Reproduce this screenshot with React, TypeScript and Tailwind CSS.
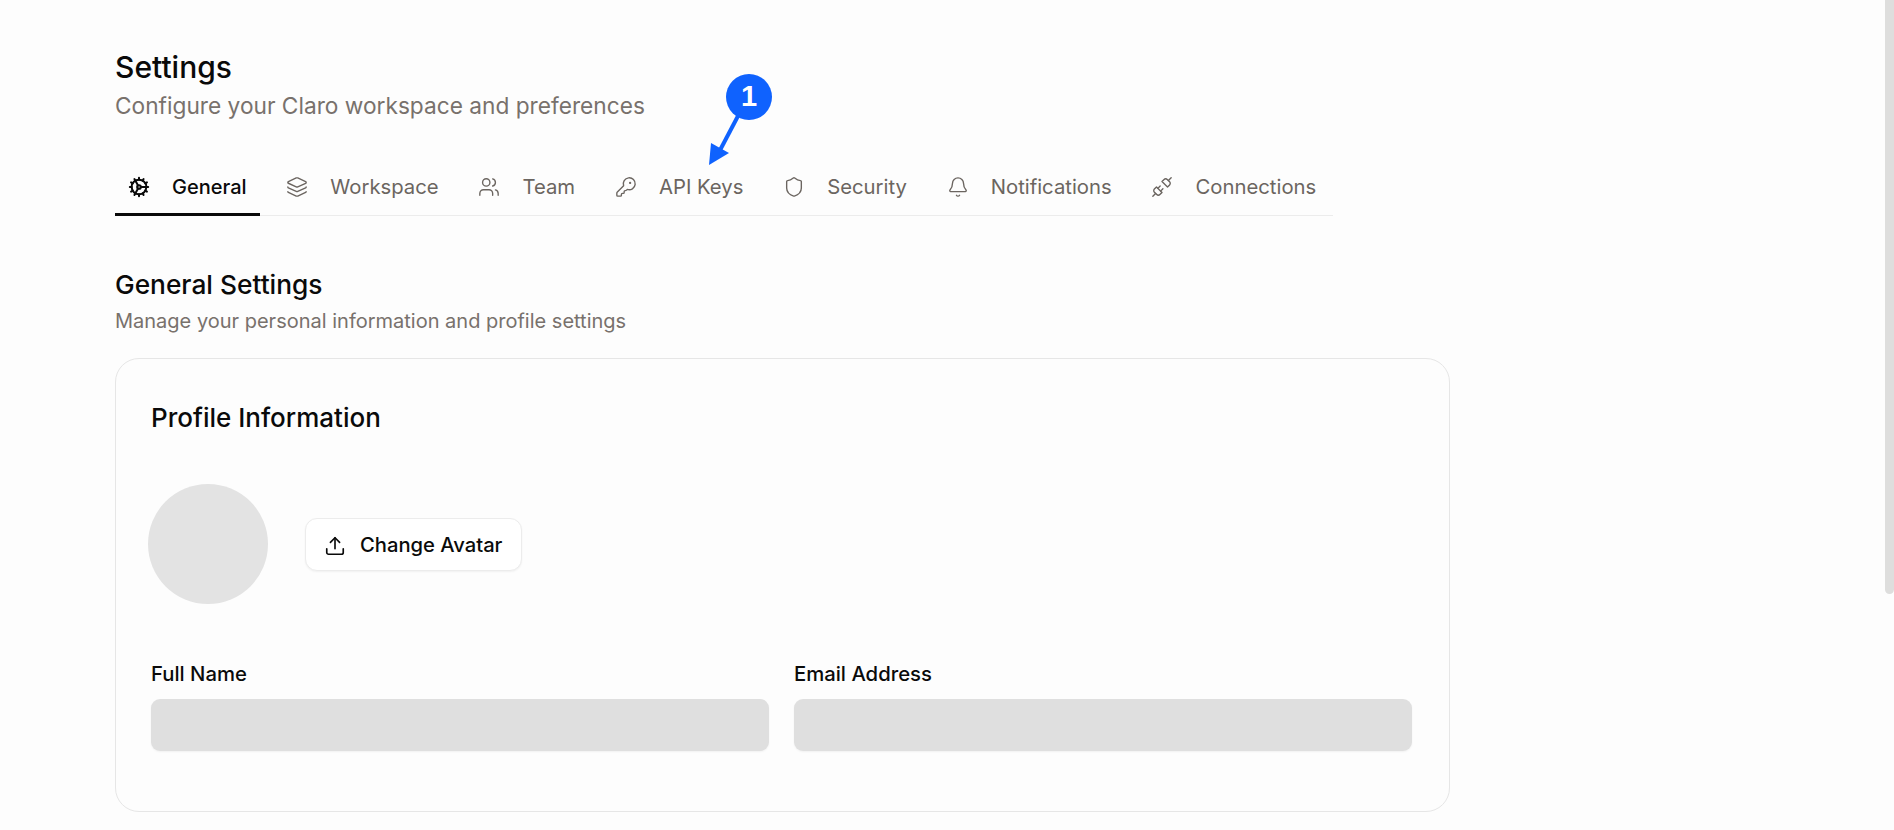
import { Cog, Layers, Users, KeyRound, Shield, Bell, Unplug, Upload } from "lucide-react";

const tabs = [
  { label: "General", Icon: Cog, active: true },
  { label: "Workspace", Icon: Layers },
  { label: "Team", Icon: Users },
  { label: "API Keys", Icon: KeyRound },
  { label: "Security", Icon: Shield },
  { label: "Notifications", Icon: Bell },
  { label: "Connections", Icon: Unplug },
];

export default function App() {
  return (
    <div className="relative h-[830px] w-full overflow-hidden bg-[#fdfdfd] font-['Inter',sans-serif]">
      <main className="pl-[115px] pt-[49px]">
        <h1 className="text-[30px] leading-[36px] font-medium text-[#0a0a0a]">Settings</h1>
        <p className="mt-[5px] text-[22.7px] leading-[32px] text-[#78716c]">Configure your Claro workspace and preferences</p>

        <nav className="mt-[37px] flex w-[1218px] gap-[13.8px] border-b-[1.5px] border-[#ececec]">
          {tabs.map(({ label, Icon, active }) => (
            <div
              key={label}
              className={`-mb-[1.5px] flex h-[57px] shrink-0 items-center gap-[22px] whitespace-nowrap border-b-[3px] px-[13px] pt-[2px] ${active ? "border-[#0a0a0a] text-[20px] font-medium text-[#0a0a0a]" : "border-transparent text-[20.3px] text-[#6b6560]"}`}
            >
              <Icon size={22} strokeWidth={active ? 2.2 : 1.5} className="shrink-0" />
              <span>{label}</span>
            </div>
          ))}
        </nav>

        <h2 className="mt-[52px] text-[26.3px] leading-[34px] font-medium text-[#0a0a0a]">General Settings</h2>
        <p className="mt-[5px] text-[20px] leading-[28px] text-[#78716c]">Manage your personal information and profile settings</p>

        <section className="mt-[23px] h-[454px] w-[1335px] rounded-[24px] border-[1.5px] border-[#e6e6e6] px-[35px] pt-[41px]">
          <h3 className="text-[26px] leading-[36px] font-medium text-[#0a0a0a]">Profile Information</h3>
          <div className="mt-[48px] -ml-[3px] flex items-center gap-[37px]">
            <div className="h-[120px] w-[120px] rounded-full bg-[#e3e3e3]" />
            <button className="relative top-[1px] flex h-[53px] w-[217px] items-center gap-[14px] rounded-[12px] border-[1.5px] border-[#ececec] bg-white pl-[18px] pt-[2px] text-[20.2px] font-medium text-[#0a0a0a] shadow-xs">
              <Upload size={22} strokeWidth={1.8} />
              <span>Change Avatar</span>
            </button>
          </div>
          <div className="mt-[56px] grid w-[1261px] grid-cols-2 gap-x-[25px]">
            <div>
              <div className="text-[20.3px] leading-[28px] font-medium text-[#0a0a0a]">Full Name</div>
              <div className="mt-[11px] h-[52px] rounded-[9px] bg-[#dfdfdf] shadow-xs" />
            </div>
            <div>
              <div className="text-[20.3px] leading-[28px] font-medium text-[#0a0a0a]">Email Address</div>
              <div className="mt-[11px] h-[52px] rounded-[9px] bg-[#dfdfdf] shadow-xs" />
            </div>
          </div>
        </section>
      </main>

      <div className="absolute right-0 top-0 h-[594px] w-[9px] rounded-b-[5px] bg-[#dededd]" />

      <svg className="absolute left-[700px] top-[70px]" width="90" height="100" viewBox="0 0 90 100" fill="none">
        <line x1="38" y1="46" x2="18" y2="84" stroke="#0f62fe" strokeWidth="4" />
        <path d="M9 95 L11 73 L29 83 Z" fill="#0f62fe" />
      </svg>
      <div className="absolute left-[726px] top-[74px] flex h-[46px] w-[46px] items-center justify-center rounded-full bg-[#0f62fe] font-['Liberation_Sans',sans-serif] text-[29px] font-bold text-white">1</div>
    </div>
  );
}
